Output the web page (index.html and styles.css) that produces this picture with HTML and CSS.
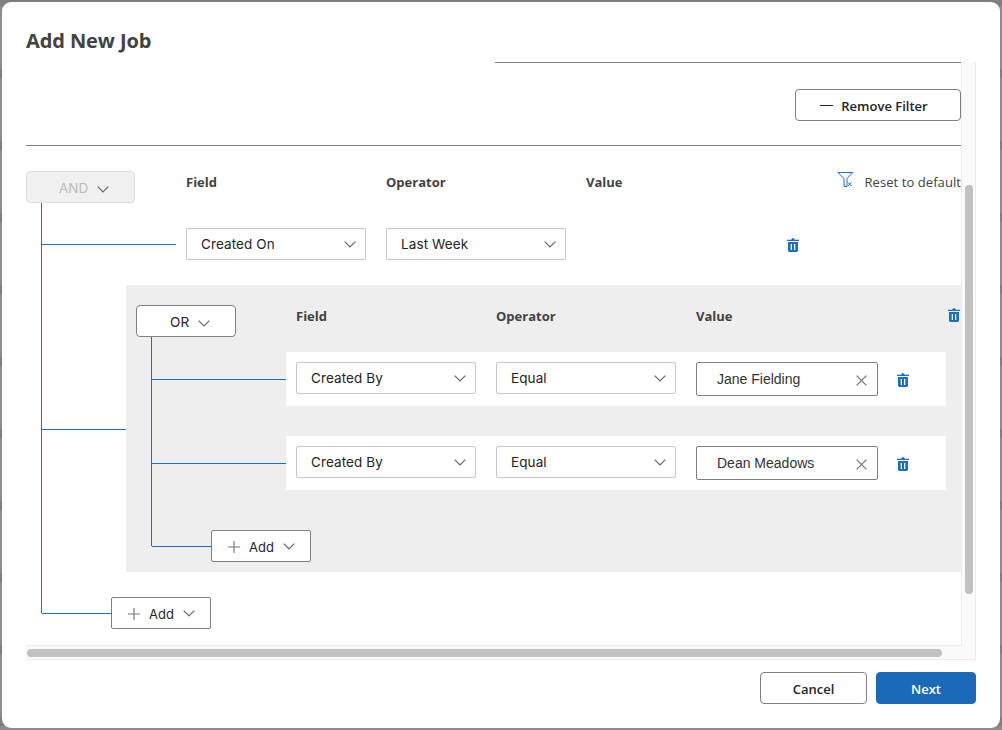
FILE: index.html
```html
<!DOCTYPE html>
<html lang="en">
<head>
    <meta charset="UTF-8">
    <meta name="viewport" content="width=device-width, initial-scale=1.0">
    <title>Add New Job</title>
    <link rel="stylesheet" href="styles.css">
</head>
<body>
    <svg class="icon-defs" width="0" height="0">
        <symbol id="trash" viewBox="0 0 12 14">
            <path fill="#1b6ec2" d="M4.3 1.8C4.3.8 5 .2 6 .2s1.7.6 1.7 1.6H12v1.2H0V1.8zM1 4h10v8.6c0 .8-.6 1.4-1.4 1.4H2.400C1.600 14 1 13.400 1 12.600zM3.700 6v6h1.300V6zM7 6v6h1.300V6z"/>
        </symbol>
        <symbol id="chevron" viewBox="0 0 12 7">
            <path fill="none" stroke="#666" stroke-width="1.200" d="M.7.7 6 6l5.300-5.300"/>
        </symbol>
        <symbol id="plus" viewBox="0 0 12 12">
            <path fill="none" stroke="#777" stroke-width="1.200" d="M6 0v12M0 6h12"/>
        </symbol>
        <symbol id="cross" viewBox="0 0 11 11">
            <path fill="none" stroke="#777" stroke-width="1.300" d="M.6.6l9.800 9.800M10.400.6.600 10.400"/>
        </symbol>
    </svg>

    <div class="dialog">
        <h1 class="dialog-title">Add New Job</h1>

        <div class="scroll-frame">
            <div class="scroll-view">
                <div class="top-rule"></div>
                <div class="filter-bar">
                    <button class="btn btn-remove"><span class="dash"></span>Remove Filter</button>
                </div>

                <div class="tree">
                    <div class="tree-line"></div>

                    <div class="head">
                        <button class="logic logic-off">AND <svg class="chev"><use href="#chevron"/></svg></button>
                        <div class="cols">
                            <span class="col-label">Field</span>
                            <span class="col-label">Operator</span>
                            <span class="col-label">Value</span>
                        </div>
                        <div class="reset">
                            <svg class="reset-icon" viewBox="0 0 17 15">
                                <path fill="none" stroke="#1b6ec2" d="M.8.500h15L10 6.500v8H7v-8zM11 10.500l3.500 3.500M14.500 10.500 11 14"/>
                            </svg>
                            <span>Reset to default</span>
                        </div>
                    </div>

                    <div class="rule rule-root branch branch-root">
                        <div class="select">Created On <svg class="chev"><use href="#chevron"/></svg></div>
                        <div class="select">Last Week <svg class="chev"><use href="#chevron"/></svg></div>
                        <svg class="trash trash-root"><use href="#trash"/></svg>
                    </div>

                    <div class="subgroup branch branch-group">
                        <div class="tree-line tree-line-sub"></div>
                        <svg class="trash trash-group"><use href="#trash"/></svg>

                        <div class="head">
                            <button class="logic">OR <svg class="chev"><use href="#chevron"/></svg></button>
                            <div class="cols">
                                <span class="col-label">Field</span>
                                <span class="col-label">Operator</span>
                                <span class="col-label">Value</span>
                            </div>
                        </div>

                        <div class="rule rule-sub branch branch-sub">
                            <div class="select">Created By <svg class="chev"><use href="#chevron"/></svg></div>
                            <div class="select">Equal <svg class="chev"><use href="#chevron"/></svg></div>
                            <div class="value-input"><span>Jane Fielding</span> <svg class="cross"><use href="#cross"/></svg></div>
                            <svg class="trash"><use href="#trash"/></svg>
                        </div>

                        <div class="rule rule-sub rule-next branch branch-sub">
                            <div class="select">Created By <svg class="chev"><use href="#chevron"/></svg></div>
                            <div class="select">Equal <svg class="chev"><use href="#chevron"/></svg></div>
                            <div class="value-input"><span>Dean Meadows</span> <svg class="cross"><use href="#cross"/></svg></div>
                            <svg class="trash"><use href="#trash"/></svg>
                        </div>

                        <button class="btn-add add-sub branch branch-add-sub"><svg class="plus"><use href="#plus"/></svg>Add<svg class="chev"><use href="#chevron"/></svg></button>
                    </div>

                    <button class="btn-add add-root branch branch-add-root"><svg class="plus"><use href="#plus"/></svg>Add<svg class="chev"><use href="#chevron"/></svg></button>
                </div>
            </div>
            <div class="vbar"><div class="vthumb"></div></div>
            <div class="hbar"><div class="hthumb"></div></div>
        </div>

        <div class="dialog-footer">
            <button class="btn btn-cancel">Cancel</button>
            <button class="btn btn-next">Next</button>
        </div>
    </div>
</body>
</html>
```

FILE: styles.css
```css
* { box-sizing: border-box; }

html, body { margin: 0; height: 100%; }

body {
    overflow: hidden;
    padding: 2px;
    font-family: "Inter", "Liberation Sans", sans-serif;
    color: #242424;
    background-color: #8c8c8c;
    background-image: linear-gradient(to bottom, #7f7f7f 6px, #8c8c8c 6px, #8c8c8c 69px, #7f7f7f 69px);
    background-size: 100% 72px;
}

button { font-family: inherit; color: inherit; cursor: pointer; }

.icon-defs { position: absolute; }

.dialog {
    width: 998px;
    height: 726px;
    background: white;
    border-radius: 9px;
    padding: 24px 24px 0;
}

.dialog-title {
    margin: 0;
    height: 36px;
    font-family: "Open Sans", sans-serif;
    font-size: 20px;
    line-height: 29px;
    font-weight: 700;
    letter-spacing: -.1px;
    color: #424242;
}

/* scroll box */
.scroll-frame {
    position: relative;
    width: 950px;
    height: 598px;
    background: #fafafa;
}

.scroll-view {
    width: 936px;
    height: 584px;
    overflow: hidden;
    background: white;
    border-right: 1px solid #ececec;
    border-bottom: 1px solid #ececec;
}

.vbar { position: absolute; top: 0; right: 0; width: 15px; height: 100%; border-right: 1px solid #ececec; }
.vthumb { position: absolute; left: 4px; top: 123px; width: 8px; height: 409px; border-radius: 4px; background: #c1c1c1; }
.hbar { position: absolute; left: 0; bottom: 0; width: 100%; height: 15px; border-bottom: 1px solid #ececec; }
.hthumb { position: absolute; left: 1px; top: 4px; width: 915px; height: 8px; border-radius: 4px; background: #c1c1c1; }

.top-rule { margin-left: 469px; border-top: 1px solid #808080; }

.filter-bar {
    display: flex;
    justify-content: flex-end;
    padding-top: 26px;
    padding-bottom: 24px;
    border-bottom: 1px solid #808080;
}

.btn {
    height: 32px;
    padding: 1px 0 0;
    border: 1px solid #808080;
    border-radius: 4px;
    background: white;
    font-family: "Open Sans", sans-serif;
    font-size: 13px;
    font-weight: 600;
}

.btn-remove { display: flex; align-items: center; justify-content: center; width: 166px; padding-right: 8px; }
.dash { width: 13px; border-top: 1px solid #242424; margin-right: 8px; }

/* filter tree */
.tree { position: relative; padding-top: 25px; }

.tree-line { position: absolute; left: 15px; top: 57px; height: 410px; border-left: 1px solid #1b6ec2; }
.tree-line-sub { left: 25px; top: 52px; height: 209px; }

.head { display: flex; }

.logic {
    flex: none;
    width: 100px;
    height: 32px;
    padding: 1px 0 0 8px;
    border: 1px solid #808080;
    border-radius: 4px;
    background: white;
    font-size: 13.500px;
    margin-right: 60px;
}
.logic-off {
    width: 109px;
    margin-right: 51px;
    padding-left: 7px;
    border-color: #dedede;
    background: #f0f0f0;
    color: #bdbdbd;
}
.logic .chev { margin-left: 5px; }

.cols { display: flex; gap: 20px; padding-top: 2px; }
.col-label {
    width: 180px;
    font-family: "Open Sans", sans-serif;
    font-size: 13px;
    line-height: 18px;
    font-weight: 700;
    color: #424242;
}

.reset {
    display: flex;
    align-items: flex-start;
    gap: 10px;
    margin-left: auto;
    font-family: "Open Sans", sans-serif;
    font-size: 13px;
    line-height: 23px;
    letter-spacing: .07px;
    color: #424242;
    white-space: nowrap;
}
.reset-icon { width: 17px; height: 15px; margin-top: 1px; }

.rule { display: flex; align-items: center; gap: 20px; }
.rule-root { margin-top: 25px; margin-left: 160px; }
.rule-sub {
    width: 660px;
    height: 54px;
    margin-top: 15px;
    margin-left: 150px;
    padding: 0 10px;
    background: white;
}
.rule-next { margin-top: 30px; }

.select {
    display: flex;
    align-items: center;
    justify-content: space-between;
    width: 180px;
    height: 32px;
    padding: 0 9px 0 14px;
    border: 1px solid #c8c8c8;
    border-radius: 2px;
    background: white;
    font-size: 13.500px;
    letter-spacing: .1px;
}
.select .chev { margin-top: 1px; }
.rule-sub .select { margin-bottom: 2px; }

.value-input {
    display: flex;
    align-items: center;
    justify-content: space-between;
    width: 182px;
    height: 34px;
    padding: 0 10px 0 20px;
    border: 1px solid #808080;
    border-radius: 2px;
    font-family: "Liberation Sans", sans-serif;
    font-size: 14px;
    color: #333;
}

.chev { width: 12px; height: 7px; flex: none; }
.cross { width: 11px; height: 11px; flex: none; margin-top: 2px; }
.plus { width: 12px; height: 12px; flex: none; }

.trash { width: 12px; height: 14px; flex: none; }
.rule-root .trash-root { margin-left: 201px; margin-top: 2px; }
.rule-sub .trash { margin-left: -1px; margin-top: 2px; }
.trash-group { position: absolute; right: 1px; top: 23px; }

.subgroup {
    position: relative;
    margin-top: 25px;
    margin-left: 100px;
    padding: 20px 10px 10px;
    height: 287px;
    background: #eee;
}

.btn-add {
    display: flex;
    align-items: center;
    width: 100px;
    height: 32px;
    padding: 1px 0 0 16px;
    border: 1px solid #808080;
    border-radius: 2px;
    background: white;
    font-size: 13px;
}
.btn-add .plus { margin-right: 9px; }
.btn-add .chev { margin-left: 9px; margin-top: -1px; }
.add-sub { margin-top: 40px; margin-left: 75px; }
.add-root { margin-top: 25px; margin-left: 85px; }

/* connector stubs */
.branch { position: relative; }
.branch::before {
    content: "";
    position: absolute;
    border-top: 1px solid #1b6ec2;
}
.branch-root::before { left: -145px; width: 135px; top: 16px; }
.branch-group::before { left: -85px; width: 85px; top: 144px; }
.branch-sub::before { left: -135px; width: 135px; top: 27px; }
.branch-add-sub::before { left: -60px; width: 60px; top: 15px; }
.branch-add-root::before { left: -70px; width: 70px; top: 15px; }

.dialog-footer { display: flex; justify-content: flex-end; gap: 9px; width: 950px; margin-top: 12px; }
.btn-cancel { width: 107px; }
.btn-next { width: 100px; background: #1b6ab8; border-color: #1b6ab8; color: white; }
```
